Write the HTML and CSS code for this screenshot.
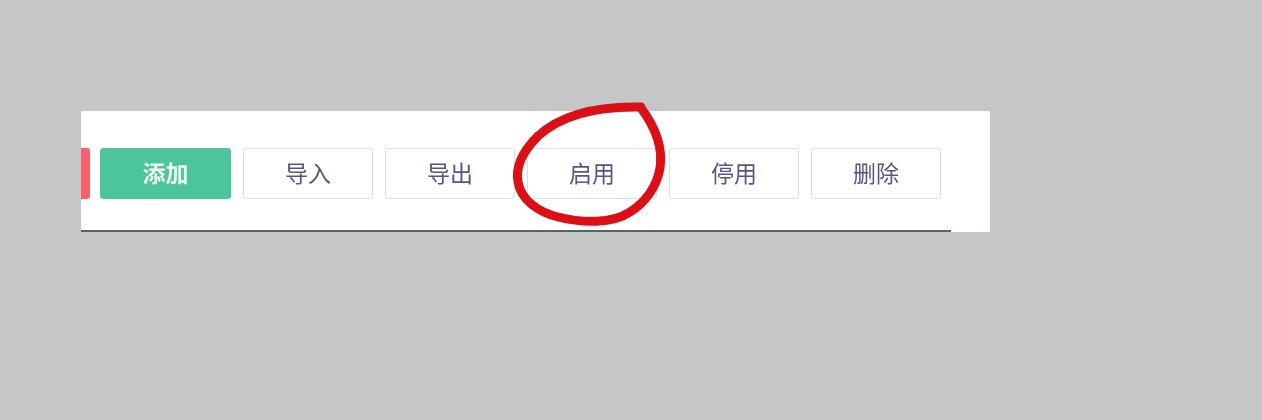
FILE: index.html
```html
<!DOCTYPE html>
<html lang="zh-CN">
<head>
    <meta charset="UTF-8">
    <title>工具栏</title>
    <link rel="stylesheet" href="styles.css">
</head>
<body>
    <div class="panel">
        <div class="toolbar">
            <span class="stub"></span>
            <button class="btn primary">添加</button>
            <button class="btn">导入</button>
            <button class="btn">导出</button>
            <button class="btn">启用</button>
            <button class="btn">停用</button>
            <button class="btn">删除</button>
        </div>
        <div class="underline"></div>
    </div>
    <svg class="scribble" width="1262" height="420" viewBox="0 0 1262 420">
        <path d="M641 107 C600 106 562 114 538 136 C524 150 515 166 518 182 C521 200 538 212 558 217 C582 223 612 224 630 212 C646 202 657 186 660 168 C663 148 656 128 641 108" fill="none" stroke="#dc0f17" stroke-width="9" stroke-linecap="round" stroke-linejoin="round"/>
    </svg>
</body>
</html>
```

FILE: styles.css
```css
body {
    margin: 0;
    height: 420px;
    padding: 111px 0 0 81px;
    box-sizing: border-box;
    background: #c5c6c8;
    font-family: "Noto Sans CJK SC", "Noto Sans", sans-serif;
    overflow: hidden;
}

.panel {
    width: 909px;
    height: 121px;
    background: #fff;
    display: flex;
    flex-direction: column;
    justify-content: space-between;
    padding-top: 37px;
    box-sizing: border-box;
    filter: blur(0.4px);
}

.toolbar {
    display: flex;
}

.stub {
    width: 9px;
    height: 51px;
    background: #f9616a;
    border-radius: 0 3px 3px 0;
}

.btn {
    width: 130px;
    height: 51px;
    margin-left: 12px;
    background: #fff;
    border: 1px solid #dcdfe8;
    border-radius: 3px;
    color: #54577f;
    font-family: inherit;
    font-size: 23px;
    padding: 0 0 3px;
}

.btn.primary {
    width: 131px;
    margin-left: 10px;
    background: #4cc59c;
    border-color: #4cc59c;
    color: #f0fbf0;
    font-weight: 700;
}

.underline {
    width: 870px;
    height: 2px;
    background: #59606f;
}

.scribble {
    position: absolute;
    top: 0;
    left: 0;
}
```
